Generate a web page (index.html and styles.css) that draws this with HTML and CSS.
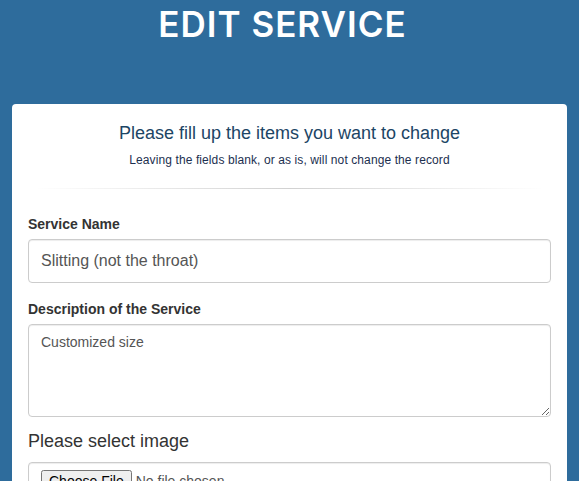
FILE: index.html
```html
<!DOCTYPE html>
<html>
<head>
<meta charset="utf-8">
<link rel="stylesheet" href="styles.css">
</head>
<body>
<h1 class="page-title">EDIT SERVICE</h1>
<div class="card">
  <div class="card-head">
    <h2 class="lead">Please fill up the items you want to change</h2>
    <p class="note">Leaving the fields blank, or as is, will not change the record</p>
  </div>
  <hr class="divider">
  <div class="field">
    <label class="label">Service Name</label>
    <input class="control control-lg" type="text" value="Slitting (not the throat)">
  </div>
  <div class="field">
    <label class="label">Description of the Service</label>
    <textarea class="control area">Customized size</textarea>
  </div>
  <div class="field">
    <div class="img-title">Please select image</div>
    <div class="control file-box"><input type="file" class="file"></div>
  </div>
</div>
</body>
</html>
```
FILE: styles.css
```css
html, body {
  margin: 0;
  padding: 0;
  background: #2e6c9c;
  font-family: "Liberation Sans", Arial, sans-serif;
  overflow: hidden;
}
.page-title {
  margin: 0;
  padding: 3px 14px 0 0;
  height: 101px;
  text-align: center;
  color: #ffffff;
  font-family: Inter, Lato, sans-serif;
  font-weight: 600;
  font-size: 35px;
  line-height: 42px;
  letter-spacing: 1px;
}
.card {
  margin: 0 12px;
  background: #ffffff;
  border-radius: 4px;
  padding: 18px 16px 20px;
  height: 500px;
}
.card-head {
  text-align: center;
}
.lead {
  margin: 0;
  font-weight: 400;
  font-size: 18px;
  line-height: 22px;
  color: #1c4565;
}
.note {
  margin: 9px 0 0;
  font-size: 12px;
  line-height: 14px;
  color: #1c2f4f;
  letter-spacing: 0.1px;
}
.divider {
  border: 0;
  height: 1px;
  margin: 21px 6px 0;
  background: linear-gradient(to right, rgba(0,0,0,0), rgba(0,0,0,0.18), rgba(0,0,0,0));
}
.field {
  display: flex;
  flex-direction: column;
}
.label {
  margin-top: 27px;
  font-weight: 700;
  font-size: 14px;
  line-height: 16px;
  color: #333333;
  margin-bottom: 7px;
}
.field + .field .label {
  margin-top: 18px;
}
.control {
  box-sizing: border-box;
  width: 100%;
  border: 1px solid #cccccc;
  border-radius: 4px;
  background: #fff;
  color: #555555;
  font-family: "Liberation Sans", Arial, sans-serif;
  box-shadow: inset 0 1px 1px rgba(0,0,0,0.075);
  margin: 0;
}
.control-lg {
  height: 44px;
  padding: 0 12px;
  font-size: 16px;
}
.area {
  height: 93px;
  padding: 8px 12px;
  font-size: 14px;
  line-height: 18px;
  resize: vertical;
}
.img-title {
  margin-top: 14px;
  font-size: 18px;
  line-height: 20px;
  color: #333333;
  margin-bottom: 11px;
}
.file-box {
  height: 40px;
  padding: 7px 12px;
}
.file {
  font-family: "Liberation Sans", Arial, sans-serif;
  font-size: 14px;
  color: #555;
}
```
